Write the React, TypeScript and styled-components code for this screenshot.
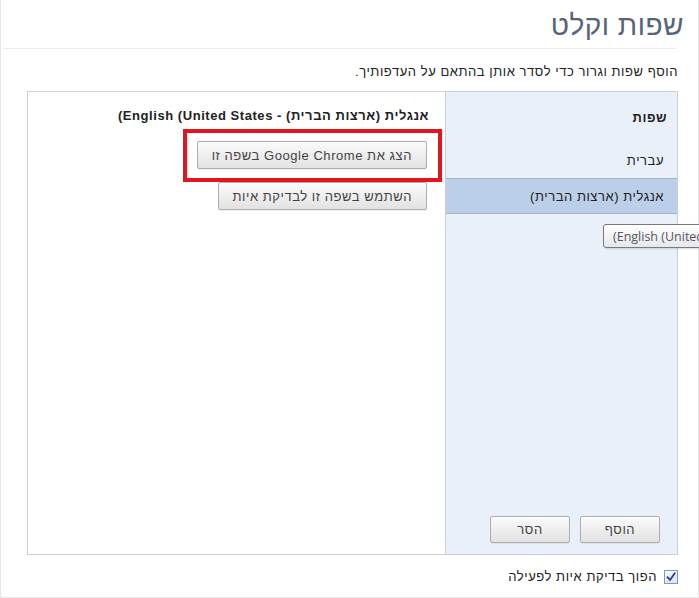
import React from "react";
import styled, { createGlobalStyle } from "styled-components";

const GlobalStyle = createGlobalStyle`
  html, body {
    margin: 0;
    padding: 0;
    background: #ffffff;
    overflow: hidden;
  }
  body {
    font-family: "Liberation Sans", Arial, sans-serif;
    font-size: 13px;
    letter-spacing: 0.55px;
    color: #222;
  }
`;

const Page = styled.div`
  position: relative;
  box-sizing: border-box;
  width: 699px;
  height: 598px;
  direction: rtl;
  border-left: 1px solid #e6e6e6;
  border-right: 1px solid #e6e6e6;
  border-bottom: 1px solid #e6e6e6;
  display: flex;
  flex-direction: column;
`;

const Header = styled.header`
  box-sizing: border-box;
  height: 49px;
  margin-left: 2px;
  margin-right: 22px;
  padding-top: 10px;
  border-bottom: 1px solid #ececec;
`;

const Title = styled.h1`
  margin: 0 -8px 0 0;
  font-family: "Liberation Sans", Arial, sans-serif;
  font-weight: normal;
  font-size: 28px;
  letter-spacing: 0.5px;
  line-height: 32px;
  color: #56637a;
`;

const Content = styled.main`
  padding: 0 20px 0 26px;
  display: flex;
  flex-direction: column;
`;

const Description = styled.p`
  margin: 15px 0 0 0;
  font-size: 13px;
  line-height: 16px;
  color: #222;
`;

const Panel = styled.section`
  box-sizing: border-box;
  margin-top: 11px;
  height: 464px;
  border: 1px solid #cfcfcf;
  display: grid;
  grid-template-columns: 232px 1fr;
`;

const ListPane = styled.div`
  background: #eaf0fa;
  border-left: 1px solid #c9cfd8;
  display: flex;
  flex-direction: column;
`;

const ListHeader = styled.div`
  height: 50px;
  display: flex;
  align-items: center;
  padding-right: 10px;
  font-weight: bold;
  color: #222;
`;

const ListRow = styled.div<{ $selected?: boolean }>`
  box-sizing: border-box;
  height: 36px;
  display: flex;
  align-items: center;
  padding-right: 13px;
  color: #222;
  background: ${(p) => (p.$selected ? "#bccfe9" : "transparent")};
  border-top: 1px solid ${(p) => (p.$selected ? "#9db5d8" : "transparent")};
  border-bottom: 1px solid ${(p) => (p.$selected ? "#9db5d8" : "transparent")};
`;

const ListFooter = styled.div`
  margin-top: auto;
  display: flex;
  gap: 10px;
  padding: 0 17px 11px 0;
`;

const Button = styled.button<{ $width?: number }>`
  box-sizing: border-box;
  height: ${(p) => (p.$width ? 27 : 28)}px;
  width: ${(p) => (p.$width ? `${p.$width}px` : "auto")};
  padding: 0 14px;
  font-family: "Liberation Sans", Arial, sans-serif;
  font-size: 13px;
  letter-spacing: 0.55px;
  color: #444;
  background: linear-gradient(#fbfbfb, #ececec 60%, #e2e2e2);
  border: 1px solid #adadad;
  border-radius: 2px;
  box-shadow: 0 1px 0 rgba(0, 0, 0, 0.06), inset 0 1px 0 #ffffff;
  direction: rtl;
  white-space: nowrap;
`;

const DetailPane = styled.div`
  padding: 16px 16px 0 0;
  display: flex;
  flex-direction: column;
  align-items: flex-start;
`;

const DetailTitle = styled.div`
  font-weight: bold;
  line-height: 16px;
  color: #222;
`;

const Highlighted = styled.div`
  position: relative;
  margin-top: 17px;
  margin-right: 2px;
`;

const RedFrame = styled.div`
  position: absolute;
  top: -12px;
  bottom: -13px;
  right: -15px;
  left: -14px;
  border: 4px solid #e2141e;
  pointer-events: none;
`;

const SecondButton = styled(Button)`
  margin-top: 13px;
  margin-right: 2px;
`;

const CheckRow = styled.label`
  margin-top: 14px;
  display: flex;
  align-items: center;
  gap: 7px;
  line-height: 16px;
  color: #222;
`;

const CheckBox = styled.span`
  box-sizing: border-box;
  width: 14px;
  height: 14px;
  border: 1px solid #8197bd;
  background: linear-gradient(#f2f6fd, #dde6f4);
  display: flex;
  align-items: center;
  justify-content: center;
`;

const Tooltip = styled.div`
  position: absolute;
  top: 224px;
  left: 602px;
  box-sizing: border-box;
  height: 24px;
  padding: 0 9px;
  display: flex;
  align-items: center;
  white-space: nowrap;
  direction: rtl;
  font-family: "Open Sans", "Liberation Sans", sans-serif;
  font-size: 12.5px;
  letter-spacing: 0;
  color: #575757;
  background: linear-gradient(#ffffff, #e6e7ef);
  border: 1px solid #7a7a7a;
  border-radius: 3px;
  box-shadow: 1px 1px 2px rgba(0, 0, 0, 0.15);
`;

export default function App() {
  return (
    <>
      <GlobalStyle />
      <Page>
        <Header>
          <Title>שפות וקלט</Title>
        </Header>
        <Content>
          <Description>הוסף שפות וגרור כדי לסדר אותן בהתאם על העדפותיך.</Description>
          <Panel>
            <ListPane>
              <ListHeader>שפות</ListHeader>
              <ListRow>עברית</ListRow>
              <ListRow $selected>אנגלית (ארצות הברית)</ListRow>
              <ListFooter>
                <Button $width={80}>הוסף</Button>
                <Button $width={80}>הסר</Button>
              </ListFooter>
            </ListPane>
            <DetailPane>
              <DetailTitle>
                אנגלית (ארצות הברית) - <bdi>English (United States</bdi>)
              </DetailTitle>
              <Highlighted>
                <Button>הצג את Google Chrome בשפה זו</Button>
                <RedFrame />
              </Highlighted>
              <SecondButton>השתמש בשפה זו לבדיקת איות</SecondButton>
            </DetailPane>
          </Panel>
          <CheckRow>
            <CheckBox>
              <svg width="10" height="10" viewBox="0 0 10 10">
                <path d="M1.5 5.2 L4 8 L8.8 1.2" fill="none" stroke="#1f3f8f" strokeWidth="1.8" strokeLinecap="round" strokeLinejoin="round" />
              </svg>
            </CheckBox>
            הפוך בדיקת איות לפעילה
          </CheckRow>
        </Content>
        <Tooltip>
          <bdi>English (United States</bdi>)
        </Tooltip>
      </Page>
    </>
  );
}
